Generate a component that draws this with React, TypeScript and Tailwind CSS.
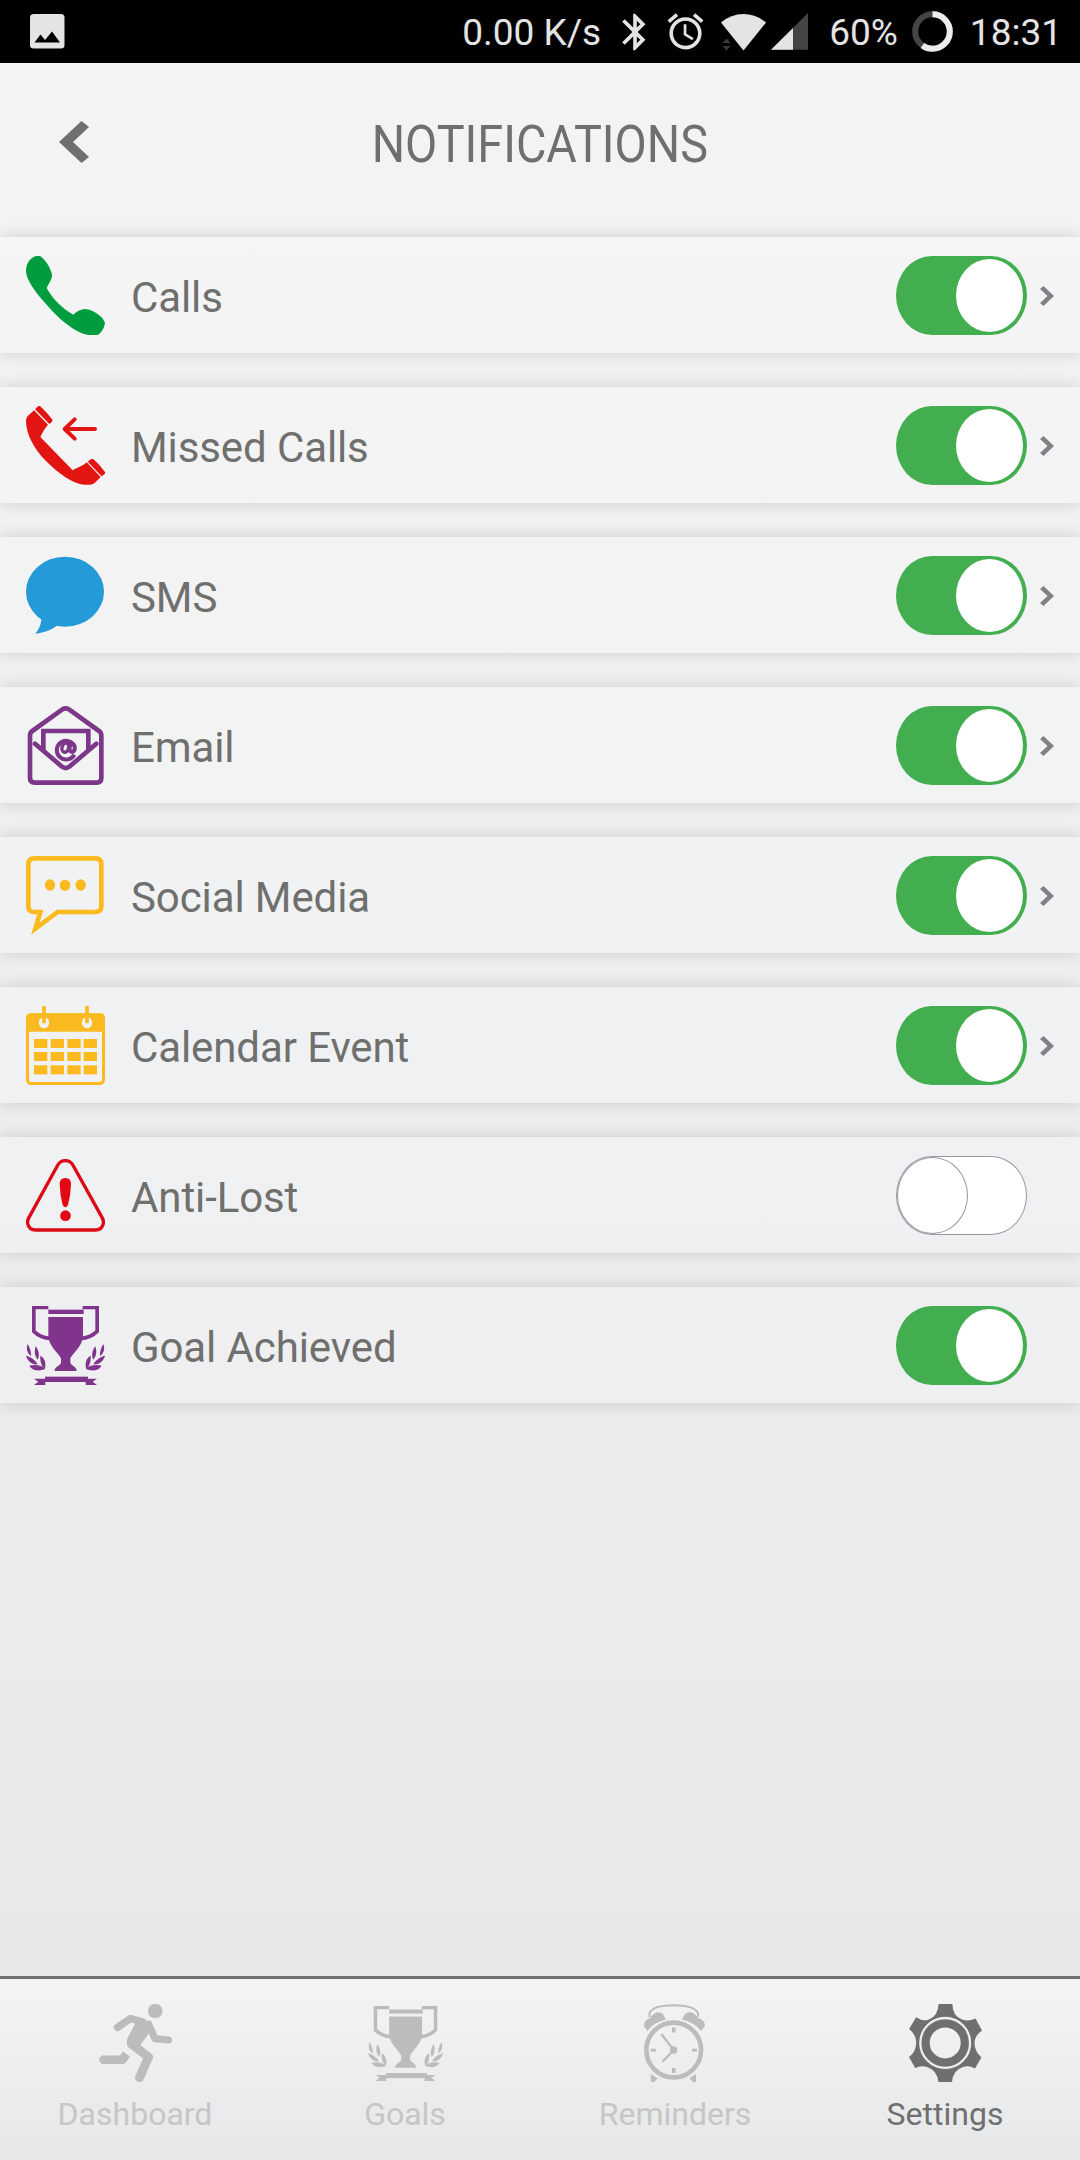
import { ReactNode, useState } from "react";
import { MdAccessAlarm, MdBluetooth } from "react-icons/md";

function CallIcon() {
  return (
    <svg viewBox="0 0 237 237" className="w-[79px] h-[79px]" fill="#009d3f">
      <path d="M0 45C0 20 15 4 30 0H42C56 8 72 32 78 55C79 70 70 80 62 96C76 124 110 160 142 176C151 167 164 160 178 159C202 162 230 180 237 200C235 215 227 229 215 237H195C160 237 112 202 70 155C30 112 0 72 0 45Z" />
    </svg>
  );
}

function MissedCallIcon() {
  return (
    <svg viewBox="0 0 237 237" className="w-[79px] h-[79px]" fill="#e31513">
      <path d="M0 45C0 32 8 28 24 13L66 56C56 68 49 80 43 93L140 193C152 185 168 182 182 169L224 213L206 231C197 237 185 237 175 236C140 233 100 205 60 165C25 130 0 85 0 45Z" />
      <path d="M27 10L37 0H42Q64 20 80 42Q80 48 70 54Z" />
      <path d="M185 167L195 159H202Q222 177 237 198V203L227 211Z" />
      <path
        d="M207 69H116M146 40L116 69L146 98"
        fill="none"
        stroke="#e31513"
        strokeWidth="12"
        strokeLinecap="round"
        strokeLinejoin="round"
      />
    </svg>
  );
}

function SmsIcon() {
  return (
    <svg viewBox="0 0 237 237" className="w-[79px] h-[79px]" fill="#249ad8">
      <ellipse cx="117" cy="107" rx="117" ry="105" />
      <path d="M46 182C47 203 39 220 28 233C56 230 76 222 94 208Z" />
    </svg>
  );
}

function EmailIcon() {
  return (
    <svg viewBox="0 0 237 237" className="w-[79px] h-[79px]" fill="none" stroke="#7d3788" strokeWidth="14">
      <path d="M12 88Q12 80 19 75L108 11Q119 3 130 11L219 75Q226 80 226 88V216Q226 230 212 230H26Q12 230 12 216Z" />
      <path d="M52 132V75H187V132" />
      <path d="M27 113L108 182Q119 190 130 182L211 113" strokeLinecap="round" />
      <path d="M145 146A28 28 0 1 1 146 121Q148 137 138 138Q129 138 131 125L134 111" strokeWidth="12" />
      <ellipse cx="118" cy="125" rx="10" ry="14" strokeWidth="10" transform="rotate(15 118 125)" />
    </svg>
  );
}

function SocialIcon() {
  return (
    <svg viewBox="0 0 237 237" className="w-[79px] h-[79px]" fill="#fbba1f">
      <path
        d="M95 168H208Q226 168 226 150V25Q226 7 208 7H25Q7 7 7 25V150Q7 168 25 168H43L28 218Z"
        fill="none"
        stroke="#fbba1f"
        strokeWidth="14"
      />
      <ellipse cx="72" cy="87" rx="15.5" ry="17" />
      <ellipse cx="117" cy="88" rx="16" ry="17" />
      <ellipse cx="164" cy="87" rx="15.5" ry="17" />
    </svg>
  );
}

function CalendarIcon() {
  return (
    <svg viewBox="0 0 237 237" className="w-[79px] h-[79px]" fill="#fbba1f">
      <rect x="4.5" y="27" width="228" height="205.500" rx="11" fill="none" stroke="#fbba1f" strokeWidth="9" />
      <path d="M0 77V36Q0 22 14 22H223Q237 22 237 36V77Z" />
      {[54, 183].map((x) => (
        <g key={x}>
          <ellipse cx={x} cy="50" rx="15.500" ry="17" fill="#f1f2f3" />
          <path d={`M${x - 12} 22H${x + 12}V36H${x - 12}Z`} />
          <rect x={x - 5.5} width="11" height="52" rx="2" />
        </g>
      ))}
      {[99, 138, 178].map((y) =>
        [24, 74, 124, 173].map((x) => <rect key={`${x}-${y}`} x={x} y={y} width="40" height="27" />)
      )}
    </svg>
  );
}

function WarningIcon() {
  return (
    <svg viewBox="0 0 237 237" className="w-[79px] h-[79px]" fill="#e30613">
      <path
        d="M95 28Q102 14 118 14Q134 14 141 28L228 184Q234 195 232 203Q228 222 208 222H29Q9 222 5 203Q3 195 9 184Z"
        fill="none"
        stroke="#dc0a17"
        strokeWidth="10"
      />
      <path d="M118 66Q135 66 135 84Q134 118 126 147Q118 161 110 147Q102 118 101 84Q101 66 118 66Z" />
      <circle cx="118.500" cy="179" r="16" />
    </svg>
  );
}

function LaurelHalf() {
  return (
    <>
      <path d="M67 4.500H23.500V76Q42 94 70 97" fill="none" stroke="currentColor" strokeWidth="11" />
      <path d="M5 114C-1 130 4 142 15 150C16 136 11 124 5 114Z" />
      <path d="M29 121C24 138 26 150 35 161C42 148 38 132 29 121Z" />
      <path d="M43 149C42 168 46 178 56 190C61 172 57 156 43 149Z" />
      <path d="M0 149C10 151 28 160 35 175C18 177 5 166 0 149Z" />
      <path d="M10 179C24 176 46 176 57 189C42 196 20 196 10 179Z" />
      <path d="M24 218H58V237H24L37 227Z" />
    </>
  );
}

function TrophyIcon({ className }: { className: string }) {
  return (
    <svg viewBox="0 0 237 237" preserveAspectRatio="none" className={className} fill="currentColor">
      <LaurelHalf />
      <g transform="translate(237 0) scale(-1 1)">
        <LaurelHalf />
      </g>
      <rect x="67" y="11" width="106" height="13" />
      <path d="M67 33H171V92C168 122 141 140 133 157V171C140 182 152 182 152 195H86C86 182 98 182 105 171V157C97 140 70 122 67 92Z" />
      <rect x="57" y="212" width="129" height="16" />
    </svg>
  );
}

function RunnerIcon() {
  return (
    <svg
      viewBox="0 0 73 78"
      className="w-[73px] h-[78px]"
      fill="none"
      stroke="currentColor"
      strokeLinecap="round"
      strokeLinejoin="round"
    >
      <circle cx="56.200" cy="7" r="7.300" fill="currentColor" stroke="none" />
      <path d="M18.600 23.300L31.500 14.500L44 18" strokeWidth="7.500" />
      <path d="M49.500 20L56 34.700L69.500 36" strokeWidth="7.200" />
      <path d="M42 15L50 18Q54 22 50 29L40 43H30Q26 40 29 33L37 18Z" fill="currentColor" stroke="none" />
      <path d="M32.500 40L49.500 53L40.600 73.500" strokeWidth="9" />
      <path d="M4.500 55.800H23.500L27.500 50" strokeWidth="8.600" strokeLinecap="butt" />
      <circle cx="4.500" cy="55.800" r="4.300" fill="currentColor" stroke="none" />
    </svg>
  );
}

function ClockIcon() {
  return (
    <svg viewBox="0 0 62 78" className="w-[62px] h-[78px]" fill="currentColor">
      <g fill="none" stroke="currentColor">
        <circle cx="29.700" cy="46" r="27.400" strokeWidth="4.600" />
        <path d="M5.500 13V9Q9 1.200 29.700 1.200Q50 1.200 54 9V13" strokeWidth="2" />
        <path d="M17.500 30.300L29.700 46L18.600 57.600" strokeWidth="2.400" />
      </g>
      <path d="M3.500 27L0 22Q0 16 6 14Q12 5 19 10L22 15.500Q10 18 3.500 27Z" />
      <path d="M57 27L61 22Q61 16 54 14Q48 5 41 10L38 15.500Q50 18 57 27Z" />
      <circle cx="29.700" cy="46" r="3.700" />
      <path d="M28 23.500h3.500v5H28zM28 64h3.500v5H28zM6.500 44.700h5.500v2.800H6.500zM48 44.700h5v2.800h-5z" />
      <path d="M6.900 70L13.500 74.500L10 78H6.900ZM52 70L45.500 74L49 78H52Z" />
    </svg>
  );
}

function GearIcon() {
  return (
    <svg viewBox="0 0 73 78" className="w-[73px] h-[78px]" fill="currentColor">
      <path
        fillRule="evenodd"
        d="M29.600 0H43.400Q43.400 12 53 15.500Q59 18 66.500 14.500L73 26.500Q65.500 32 65.500 39Q65.500 47 72.400 53.500L66 64.500Q60 61 54 63Q44 66 43 78H29.500Q28 66 18 63Q12 61 6.200 64L0 53Q7 48 7.200 39Q7 30 0 25L7.200 13.300Q14 18 20 15.500Q29 12 29.600 0ZM36.200 23.400A15.500 15.500 0 1 0 36.200 54.400A15.500 15.500 0 1 0 36.200 23.400Z"
      />
      <circle cx="36.200" cy="38.900" r="24.900" fill="none" stroke="#ededee" strokeWidth="2.300" />
    </svg>
  );
}

function StatusBar() {
  return (
    <div className="h-[63px] bg-black text-[#e4e4e4] flex items-center pl-[30px] pr-[18px] text-[37px] leading-[60px]">
      <svg viewBox="0 0 35 35" className="w-[35px] h-[35px]">
        <rect width="34.500" height="34.500" rx="3.500" fill="#e4e4e4" />
        <path d="M4.500 28.500L10.500 20.500L15 26L22 17.500L30 28.500Z" fill="#000" />
      </svg>
      <span className="ml-auto pt-[3px]">0.00 K/s</span>
      <MdBluetooth className="w-[44px] h-[44px] ml-[12px]" />
      <MdAccessAlarm className="w-[43px] h-[43px] ml-[7px]" />
      <svg viewBox="0 0 87 38" className="w-[87px] h-[38px] ml-[14px]">
        <path d="M0 9.500Q10 1 22.500 1Q35 1 45 9.500L22.500 37.500Z" fill="#e4e4e4" />
        <path d="M1.500 30L5.500 25.500L9.500 30ZM1.500 33L5.500 37.500L9.500 33Z" fill="#383838" />
        <path d="M50 36.700L87 0V36.700Z" fill="#444" />
        <path d="M50 36.700L72 14.900V36.700Z" fill="#e4e4e4" />
      </svg>
      <span className="ml-[21px] pt-[3px]">60%</span>
      <svg viewBox="0 0 41 41" className="w-[41px] h-[41px] ml-[14px]" fill="none" strokeWidth="6">
        <circle cx="20.500" cy="20.500" r="17.300" stroke="#444" />
        <circle
          cx="20.500"
          cy="20.500"
          r="17.300"
          stroke="#ececec"
          pathLength="100"
          strokeDasharray="60 40"
          transform="rotate(-90 20.500 20.500)"
        />
      </svg>
      <span className="ml-[17px] pt-[3px]">18:31</span>
    </div>
  );
}

function Toggle({ on, onClick }: { on: boolean; onClick: () => void }) {
  return on ? (
    <button
      onClick={onClick}
      className="w-[131px] h-[79px] rounded-[36px/39.5px] bg-[#43ae50] flex items-center justify-end pr-[4px] cursor-pointer"
    >
      <span className="w-[67px] h-[73px] rounded-[50%] bg-white" />
    </button>
  ) : (
    <button
      onClick={onClick}
      className="w-[131px] h-[79px] rounded-[36px/39.5px] bg-white border border-[#98989e] flex items-center cursor-pointer"
    >
      <span className="w-[71px] h-[77px] rounded-[50%] bg-white border border-[#98989e]" />
    </button>
  );
}

type RowT = { label: string; icon: ReactNode; on: boolean; arrow: boolean };

const rows: RowT[] = [
  { label: "Calls", icon: <CallIcon />, on: true, arrow: true },
  { label: "Missed Calls", icon: <MissedCallIcon />, on: true, arrow: true },
  { label: "SMS", icon: <SmsIcon />, on: true, arrow: true },
  { label: "Email", icon: <EmailIcon />, on: true, arrow: true },
  { label: "Social Media", icon: <SocialIcon />, on: true, arrow: true },
  { label: "Calendar Event", icon: <CalendarIcon />, on: true, arrow: true },
  { label: "Anti-Lost", icon: <WarningIcon />, on: false, arrow: false },
  {
    label: "Goal Achieved",
    icon: <TrophyIcon className="w-[79px] h-[79px] text-[#80348c]" />,
    on: true,
    arrow: false,
  },
];

const tabs = [
  { label: "Dashboard", icon: <RunnerIcon /> },
  { label: "Goals", icon: <TrophyIcon className="w-[75px] h-[75px]" /> },
  { label: "Reminders", icon: <ClockIcon /> },
  { label: "Settings", icon: <GearIcon /> },
];

export default function App() {
  const [enabled, setEnabled] = useState(rows.map((row) => row.on));
  const [activeTab, setActiveTab] = useState("Settings");

  return (
    <div className="w-[1080px] h-[2160px] overflow-hidden flex flex-col font-['Roboto',sans-serif] text-[#6f6f6e] bg-linear-to-b from-[#f4f4f4] via-[#edeef0] via-50% to-[#e6e7e8]">
      <StatusBar />
      <header className="h-[174px] shrink-0 flex items-center relative">
        <button className="ml-[59px] -mt-[17px] cursor-pointer">
          <svg viewBox="0 0 30 42" className="w-[30px] h-[42px]">
            <path d="M0 21L22.500 0L30 6L14 21L30 36L22.500 42Z" fill="#6f6f6f" />
          </svg>
        </button>
        <h1 className="absolute inset-x-0 top-[52px] text-center text-[52px] leading-[60px]">
          <span className="inline-block scale-x-90">NOTIFICATIONS</span>
        </h1>
      </header>
      <main className="flex-1 flex flex-col gap-[34px]">
        {rows.map((row, index) => (
          <div
            key={row.label}
            className="h-[116px] flex items-center pl-[26px] bg-white/20 shadow-[0_0_16px_rgba(0,0,0,0.15)]"
          >
            {row.icon}
            <span className="ml-[26px] pt-[6px] text-[42px] leading-[50px] tracking-[-0.1px]">{row.label}</span>
            <div className="ml-auto w-[184px] flex items-center gap-[13px]">
              <Toggle
                on={enabled[index]}
                onClick={() => setEnabled(enabled.map((value, i) => (i === index ? !value : value)))}
              />
              {row.arrow && (
                <svg viewBox="0 0 14 20" className="w-[14px] h-[20px] mt-[2px]">
                  <path d="M0 3L3.500 0L14 10L3.500 20L0 17L7.500 10Z" fill="#808085" />
                </svg>
              )}
            </div>
          </div>
        ))}
      </main>
      <nav className="h-[184px] shrink-0 border-t-[3px] border-[#6f6f6f] bg-linear-to-b from-[#f4f4f4] to-[#e6e7e8] grid grid-cols-4">
        {tabs.map((tab) => (
          <button
            key={tab.label}
            onClick={() => setActiveTab(tab.label)}
            className={`flex flex-col items-center pt-[25px] cursor-pointer ${
              activeTab === tab.label ? "text-[#6f6f6f]" : "text-[#bcbcbc]"
            }`}
          >
            <div className="h-[78px] flex items-center">{tab.icon}</div>
            <span
              className={`mt-[13px] text-[32px] leading-[38px] ${
                activeTab === tab.label ? "" : "text-[#c6c6c6]"
              }`}
            >
              {tab.label}
            </span>
          </button>
        ))}
      </nav>
    </div>
  );
}
